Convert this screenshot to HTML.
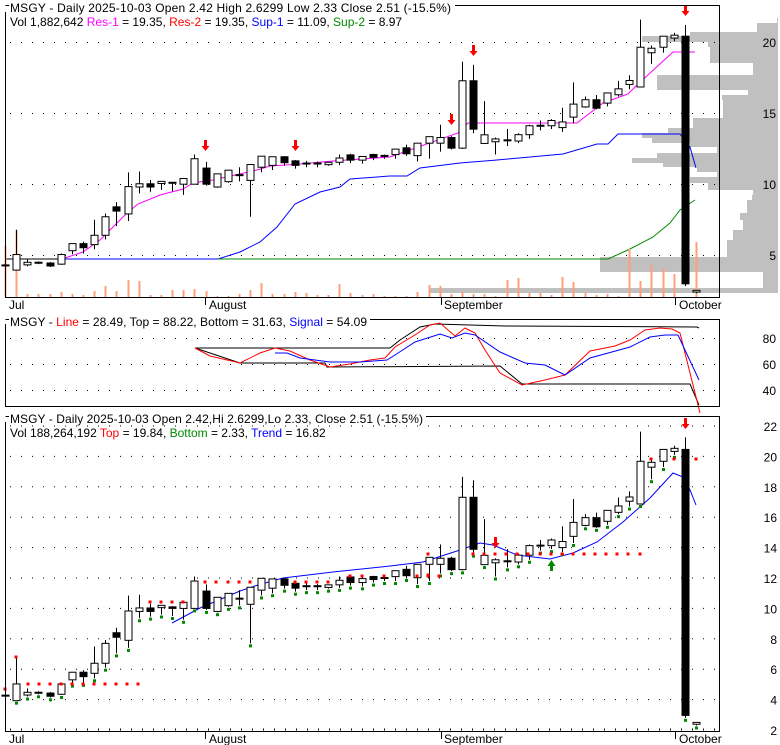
<!DOCTYPE html>
<html><head><meta charset="utf-8">
<style>
html,body{margin:0;padding:0;background:#fff;}
svg{display:block;}
text{font-family:"Liberation Sans",Arial,sans-serif;font-size:12px;fill:#000;}
</style></head>
<body>
<svg id="s" width="780" height="745" viewBox="0 0 780 745" xmlns="http://www.w3.org/2000/svg">
<g id="bg"></g>
<g id="grid" stroke="#000" stroke-width="1" stroke-dasharray="1 10" fill="none">
<line x1="10" y1="42.5" x2="719" y2="42.5"/><line x1="10" y1="113.5" x2="719" y2="113.5"/>
<line x1="10" y1="184.5" x2="719" y2="184.5"/><line x1="10" y1="255.5" x2="719" y2="255.5"/>
<line x1="10" y1="338.5" x2="719" y2="338.5"/><line x1="10" y1="364.5" x2="719" y2="364.5"/><line x1="10" y1="390.5" x2="719" y2="390.5"/>
</g>
<g id="g3" stroke="#000" stroke-width="1" stroke-dasharray="1 10" fill="none"></g>
<g id="lines" fill="none" stroke-width="1"></g>
<g id="cand"></g>
<g id="marks"></g>
<!-- frames -->
<g fill="none" stroke="#000" stroke-width="1">
<polyline points="5.5,12 5.5,297.5 719.5,297.5 719.5,5.5 455,5.5"/>
<line x1="5.5" y1="5.5" x2="9" y2="5.5"/>
<polyline points="5.5,324 5.5,406.5 719.5,406.5 719.5,319.5 370,319.5"/>
<line x1="5.5" y1="319.5" x2="9" y2="319.5"/>
<polyline points="5.5,422 5.5,731.5 719.5,731.5 719.5,416.5 426,416.5"/>
<line x1="5.5" y1="416.5" x2="9" y2="416.5"/>
<line x1="205.5" y1="297" x2="205.5" y2="305"/><line x1="441.5" y1="297" x2="441.5" y2="305"/><line x1="675.5" y1="297" x2="675.5" y2="305"/>
<line x1="205.5" y1="731" x2="205.5" y2="739"/><line x1="441.5" y1="731" x2="441.5" y2="739"/><line x1="675.5" y1="731" x2="675.5" y2="739"/>
</g>
<!-- texts -->
<text x="10" y="12" textLength="441">MSGY - Daily 2025-10-03 Open 2.42  High 2.6299  Low 2.33  Close 2.51 (-15.5%)</text>
<text x="10" y="26">Vol 1,882,642 <tspan fill="#f0f">Res-1</tspan> = 19.35, <tspan fill="#f00">Res-2</tspan> = 19.35, <tspan fill="#00f">Sup-1</tspan> = 11.09, <tspan fill="#080">Sup-2</tspan> = 8.97</text>
<text x="9" y="309">Jul</text><text x="209" y="309">August</text><text x="444" y="309">September</text><text x="679" y="309">October</text>
<text x="776" y="47" text-anchor="end">20</text><text x="776" y="118" text-anchor="end">15</text><text x="776" y="189" text-anchor="end">10</text><text x="776" y="260" text-anchor="end">5</text>
<text x="10" y="326" textLength="357">MSGY - <tspan fill="#f00">Line</tspan> = 28.49, Top = 88.22, Bottom = 31.63, <tspan fill="#00f">Signal</tspan> = 54.09</text>
<text x="776" y="343" text-anchor="end">80</text><text x="776" y="369" text-anchor="end">60</text><text x="776" y="395" text-anchor="end">40</text>
<text x="10" y="423" textLength="413">MSGY - Daily 2025-10-03 Open 2.42,Hi 2.6299,Lo 2.33, Close 2.51 (-15.5%)</text>
<text x="10" y="437">Vol 188,264,192 <tspan fill="#f00">Top</tspan> = 19.84, <tspan fill="#080">Bottom</tspan> = 2.33, <tspan fill="#00f">Trend</tspan> = 16.82</text>
<text x="9" y="743">Jul</text><text x="209" y="743">August</text><text x="444" y="743">September</text><text x="679" y="743">October</text>
<g id="lab3"></g>
</svg>
<script>
var NS="http://www.w3.org/2000/svg";
function el(p,t,a){var e=document.createElementNS(NS,t);for(var k in a)e.setAttribute(k,a[k]);document.getElementById(p).appendChild(e);return e;}
// gray volume profile
var prof=[[18,23,777],[23,32,757],[32,36,690],[36,42,642],[42,47,708],[47,63,710],[63,75,753],[75,90,657],[90,95,748],[95,100,722],[100,118,723],[118,128,693],[128,133,668],[133,138,642],[138,143,652],[143,147,690],[147,153,717],[153,158,657],[158,163,632],[163,167,663],[167,172,697],[172,177,717],[177,183,690],[183,190,708],[190,195,753],[195,200,752],[200,213,747],[213,220,740],[220,230,743],[230,240,733],[240,257,727],[257,272,600],[272,288,763],[288,293,430]];
prof.forEach(function(r){el("bg","rect",{x:r[2],y:r[0],width:778-r[2],height:r[1]-r[0],fill:"#c0c0c0"});});
// panel 3 grid
for(var k=0;k<=20;k+=2){var y=426+k*15.2;el("g3","line",{x1:10,y1:y,x2:719,y2:y});
 el("lab3","text",{x:777,y:y+5,"text-anchor":"end"}).textContent=String(22-k);}
el("g3","line",{x1:10,y1:729,x2:719,y2:729,"stroke-dasharray":"1 10"});
// candles O,H,L,C
var D=[[4.26,4.63,3.97,4.26],[3.93,6.78,3.93,5.03],[4.3,4.74,4.2,4.48],[4.45,4.55,4.35,4.45],[4.43,4.5,4.15,4.22],[4.35,5.1,4.3,5.03],[5.3,5.8,5.05,5.8],[5.8,5.93,5.1,5.51],[5.73,7.49,5.4,6.39],[6.39,7.92,6.1,7.7],[8.4,8.73,7.04,8.1],[7.9,10.84,7.4,9.83],[9.8,10.9,9.35,10.03],[10.03,10.3,9.46,9.8],[10.05,10.2,9.6,10.2],[10.1,10.15,9.5,10.0],[10.0,10.4,9.25,10.4],[10.0,12.1,10.0,11.8],[11.14,11.58,9.9,10.0],[9.8,10.73,9.75,10.73],[10.18,10.99,10.1,10.99],[10.64,11.2,10.2,10.64],[10.27,11.39,7.7,11.39],[11.2,11.98,10.85,11.98],[11.33,11.94,11.0,11.94],[11.94,11.98,11.3,11.52],[11.65,11.7,11.1,11.33],[11.46,11.65,11.2,11.46],[11.46,11.6,11.2,11.46],[11.38,11.55,11.3,11.55],[11.55,12.1,11.35,11.85],[12.07,12.15,11.5,11.7],[11.7,11.96,11.45,11.96],[12.1,12.15,11.7,11.9],[12.0,12.1,11.8,12.0],[12.09,12.48,11.8,12.48],[12.57,12.8,12.0,12.15],[12.02,12.9,11.6,12.9],[12.9,13.36,11.8,13.36],[12.9,14.2,12.3,13.3],[13.3,13.4,12.45,12.55],[12.55,18.65,12.5,17.31],[17.31,18.43,13.6,13.89],[12.88,15.87,12.85,13.49],[13.0,13.3,12.1,13.2],[13.1,13.9,12.7,13.1],[13.05,13.6,12.9,13.5],[13.5,14.2,13.2,14.13],[14.13,14.5,13.8,14.13],[14.13,14.6,13.9,14.5],[14.0,15.4,13.7,14.4],[14.74,17.2,14.3,15.66],[15.46,16.2,15.4,15.97],[15.97,16.3,15.3,15.37],[15.73,16.45,15.5,16.45],[16.32,17.3,16.2,16.74],[17.05,17.7,16.7,17.33],[16.87,21.63,16.87,19.68],[19.29,19.8,18.5,19.61],[19.68,20.46,19.3,20.46],[20.33,20.7,20.1,20.53],[20.46,21.25,2.8,2.96],[2.38,2.5,2.3,2.5]];
var VT=[246,230,294,294,294,292,294,295,291,286,291,280,281,295,295,290,290,289,291,296,296,294,290,283,294,294,292,293,295,295,284,293,295,294,296,296,296,292,285,286,294,292,294,294,296,280,278,293,293,295,277,282,293,295,294,296,249,281,265,268,274,297,242];
function X(i){return 5+11.145*i;}
function y1(p){return 42.7+(20-p)*14.15;}
function y3(p){return 426+(22-p)*15.2;}
D.forEach(function(d,i){
 var x=Math.round(X(i))+0.5;
 if(VT[i]<297)el("cand","line",{x1:x,y1:VT[i],x2:x,y2:297,stroke:"#ffa07a","stroke-width":2});
 [[y1,0],[y3,1]].forEach(function(f){var Y=f[0];
  el("cand","line",{x1:x,y1:Y(d[1]),x2:x,y2:Y(d[2]),stroke:"#000"});
  var top=Y(Math.max(d[0],d[3])),bot=Y(Math.min(d[0],d[3]));
  var h=bot-top;
  if(h<1.5){el("cand","line",{x1:x-4,y1:top,x2:x+4,y2:top,stroke:"#000","stroke-width":2});}
  else el("cand","rect",{x:x-3.5,y:top,width:7,height:h,fill:d[3]>=d[0]?"#fff":"#000",stroke:"#000"});
 });
 if(i>0)el("marks","rect",{x:x-1.5,y:y3(d[2])+1,width:3,height:3,fill:"#080"});
});
function pl(pts,c,w){el("lines","polyline",{points:pts,stroke:c,"stroke-width":w||1});}
pl("65,258 83,252 100,240 127,213 138,204 160,195 183,189 193,183 213,180 257,170 270,166 300,164 333,161 390,157 458,133 468,123 577,123 603,103 628,94 637,85 673,52 695,52","#f0f");
pl("5,259 64,259","#000");
pl("64,259 218,259 240,252 260,242 277,227 295,204 320,192 340,187 350,179 390,176 407,176 420,168 460,163 497,160 563,154 597,144 608,144 618,134 680,134 690,147 696,168","#00f");
pl("218,259 608,259 630,249 653,237 670,223 680,210 695,200","#080");
// panel 2
pl("195,348 390,348 400,340 420,327 435,324 505,326 697,327 699,328","#000");
pl("195,348 240,363 325,363 327,367 500,366 522,384 690,384 699,405","#000");
pl("195,348 210,356 240,363 260,353 275,348 290,351 310,360 330,367 350,364 370,360 385,358 395,347 415,335 430,325 440,323 455,336 465,328 475,333 485,350 500,373 522,385 545,380 565,375 590,351 615,346 630,340 645,330 660,328 672,329 680,333 700,413","#f00");
pl("275,353 287,353 300,358 330,362 360,362 387,360 395,355 415,342 440,334 452,338 465,333 475,335 500,352 525,363 545,365 565,375 590,358 630,347 650,337 665,335 678,335 699,380","#00f");
// panel 3 trend
pl("172,623 187,615 200,608 240,591 258,585 283,578 333,572 390,566 423,562 457,551 480,543 493,545 517,555 550,559 573,553 597,542 623,522 650,498 673,473 683,477 690,490 696,505","#00f");
// red dots panel3
var rd=[[5,689],[16,657]];
[28,39,50,61,72,83,94,105,116,127,138].forEach(function(x){rd.push([x,684]);});
[150,161,172,183].forEach(function(x){rd.push([x,602]);});
[205,216,228,239,250,295,306,317,328].forEach(function(x){rd.push([x,582]);});
[350,362,384].forEach(function(x){rd.push([x,576]);});
[428,473,484,495,506,517,528,540,551,562,573,584,595,606,617,628,640].forEach(function(x){rd.push([x,554]);});
rd.push([428,554],[428,575],[428,576],[428,576]);
rd.push([651,459],[674,459],[696,459],[428,575],[417,576],[439,576]);
rd.forEach(function(p){el("marks","rect",{x:p[0]-1.5,y:p[1]-1.5,width:3,height:3,fill:"#f00"});});
// arrows
function arr(x,y,c,up){var d=up?[[x,y],[x-4,y+6],[x-1.5,y+6],[x-1.5,y+11],[x+1.5,y+11],[x+1.5,y+6],[x+4,y+6]]:[[x-1.5,y-11],[x+1.5,y-11],[x+1.5,y-5],[x+4,y-5],[x,y],[x-4,y-5],[x-1.5,y-5]];
 el("marks","polygon",{points:d.map(function(p){return p.join(",");}).join(" "),fill:c});}
arr(205.5,151,"#f00");arr(295.5,151,"#f00");arr(451.5,125,"#f00");arr(473.5,56,"#f00");arr(685.5,16,"#f00");
arr(495.5,548,"#f00");arr(685.5,429,"#f00");arr(551.5,560,"#080",true);
</script>
</body></html>
